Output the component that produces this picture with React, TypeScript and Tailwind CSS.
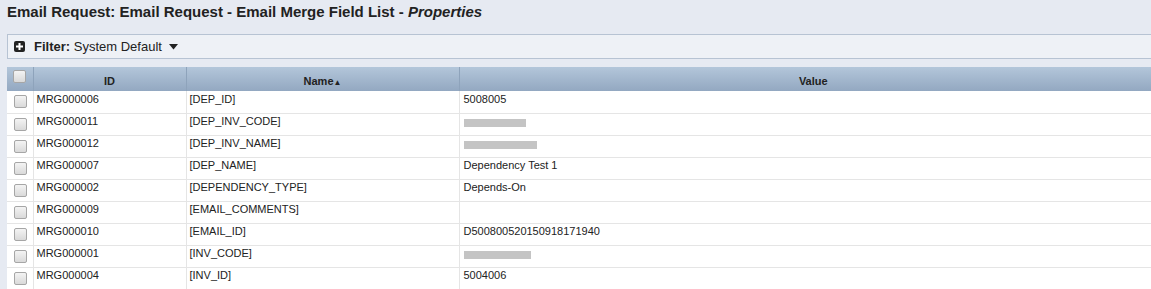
const rows: { id: string; name: string; value?: string; blur?: number }[] = [
  { id: "MRG000006", name: "[DEP_ID]", value: "5008005" },
  { id: "MRG000011", name: "[DEP_INV_CODE]", blur: 62 },
  { id: "MRG000012", name: "[DEP_INV_NAME]", blur: 73 },
  { id: "MRG000007", name: "[DEP_NAME]", value: "Dependency Test 1" },
  { id: "MRG000002", name: "[DEPENDENCY_TYPE]", value: "Depends-On" },
  { id: "MRG000009", name: "[EMAIL_COMMENTS]", value: "" },
  { id: "MRG000010", name: "[EMAIL_ID]", value: "D500800520150918171940" },
  { id: "MRG000001", name: "[INV_CODE]", blur: 67 },
  { id: "MRG000004", name: "[INV_ID]", value: "5004006" },
];

function Check() {
  return (
    <span className="block w-[13px] h-[13px] rounded-[2px] border border-[#a6a6a6] bg-gradient-to-b from-[#f4f4f4] to-[#d9d9d9]" />
  );
}

export default function App() {
  return (
    <div className="w-[1151px] h-[289px] overflow-hidden bg-[#e6eaf2] font-['Liberation_Sans',Arial,sans-serif] text-[#222]">
      <h1 className="pl-[7px] pt-[3px] h-[34px] text-[15px] font-bold leading-[18px] text-[#222]">
        Email Request: Email Request - Email Merge Field List - <i>Properties</i>
      </h1>
      <div className="ml-[7px] w-[1160px] h-[25px] border-y border-l border-[#b7c3d3] bg-[#eef1f6] flex items-center pl-[6px] gap-[9px] text-[13px]">
        <span className="w-[11px] h-[11px] rounded-[2px] bg-[#222] flex items-center justify-center">
          <svg width="7" height="7" viewBox="0 0 7 7">
            <rect x="2.5" y="0" width="2" height="7" fill="white" />
            <rect x="0" y="2.5" width="7" height="2" fill="white" />
          </svg>
        </span>
        <span>
          <b>Filter:</b> System Default
        </span>
        <svg width="9" height="6" viewBox="0 0 9 6" className="ml-[-2px]">
          <path d="M0 0 L9 0 L4.5 5.5 Z" fill="#222" />
        </svg>
      </div>
      <table className="ml-[7px] mt-[8px] w-[1160px] border-collapse text-[11px] table-fixed">
        <colgroup>
          <col className="w-[26px]" />
          <col className="w-[153px]" />
          <col className="w-[273px]" />
          <col />
        </colgroup>
        <thead>
          <tr className="h-[24px] bg-gradient-to-b from-[#b3c6da] to-[#93a8c1]">
            <th className="border-r border-[#8ea3bb] align-top pt-[3px] pl-[6px]">
              <Check />
            </th>
            <th className="border-r border-[#8ea3bb] font-bold pt-[4px]">ID</th>
            <th className="border-r border-[#8ea3bb] font-bold pt-[4px]">
              Name<span className="text-[8px]">▲</span>
            </th>
            <th className="font-bold pt-[4px]">Value</th>
          </tr>
        </thead>
        <tbody className="bg-white leading-[13px]">
          {rows.map((r) => (
            <tr key={r.id} className="h-[22px] border-b border-[#e5e5e5]">
              <td className="border-r border-[#e5e5e5] pl-[7px]">
                <Check />
              </td>
              <td className="border-r border-[#e5e5e5] pl-[3px] pb-[5px]">{r.id}</td>
              <td className="border-r border-[#e5e5e5] pl-[3px] pb-[5px]">{r.name}</td>
              <td className="pl-[4px] pb-[5px]">
                {r.blur ? (
                  <span
                    className="block h-[8px] bg-[#c4c4c4] blur-[0.5px] mt-[2px]"
                    style={{ width: r.blur }}
                  />
                ) : (
                  r.value
                )}
              </td>
            </tr>
          ))}
        </tbody>
      </table>
    </div>
  );
}
